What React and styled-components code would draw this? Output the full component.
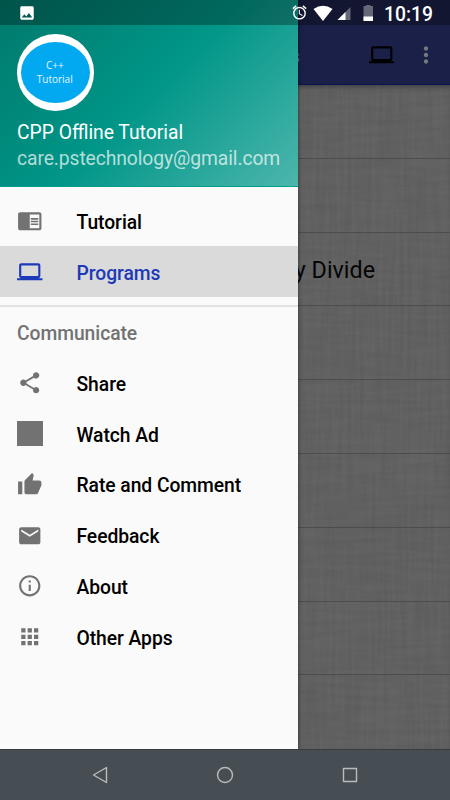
import React from "react";
import styled, { createGlobalStyle } from "styled-components";
import {
  MdAlarm,
  MdApps,
  MdChromeReaderMode,
  MdComputer,
  MdEmail,
  MdImage,
  MdInfoOutline,
  MdMoreVert,
  MdShare,
  MdThumbUp,
} from "react-icons/md";

const GlobalStyle = createGlobalStyle`
  * {
    box-sizing: border-box;
  }
  body {
    margin: 0;
    font-family: Roboto, "Noto Sans", sans-serif;
  }
`;
const Phone = styled.div`
  position: relative;
  display: flex;
  flex-direction: column;
  width: 450px;
  height: 800px;
  overflow: hidden;
`;
const AppBar = styled.header`
  display: flex;
  align-items: center;
  height: 85px;
  padding: 25px 11px 0 0;
  background: #1a2047;
  border-bottom: 1px solid #0a1250;
`;
const BarTitle = styled.div`
  width: 300px;
  padding-top: 2px;
  color: #696b76;
  font-size: 21px;
  font-weight: 500;
  text-align: right;
`;
const BarIcons = styled.div`
  display: flex;
  align-items: center;
  gap: 19px;
  margin-left: auto;
  color: #000;

  svg:last-child {
    color: #77777d;
  }
`;
const Content = styled.main`
  position: relative;
  flex: 1;
  background: #646464;
`;
const Cloth = styled.svg`
  position: absolute;
  inset: 0;
  width: 100%;
  height: 100%;
`;
const ProgramList = styled.div`
  position: relative;
  height: 664px;
  box-shadow: inset 0 5px 5px -3px rgba(0, 0, 0, 0.35);
`;
const ProgramRow = styled.div`
  display: flex;
  align-items: center;
  height: 73.8px;
  padding: 2px 0 0 18px;
  border-bottom: 1px solid #4c4c4c;
  color: #050505;
  font-size: 23.3px;

  &:last-child {
    border-bottom: 0;
  }
`;
const ProgramName = styled.div`
  width: 357px;
  text-align: right;
`;
const NavBar = styled.nav`
  position: relative;
  display: flex;
  justify-content: center;
  align-items: center;
  gap: 101px;
  height: 51px;
  background: #464e53;
  border-top: 1px solid #353b3f;
`;
const NavIcon = styled.svg`
  width: 24px;
  height: 24px;
  fill: none;
  stroke: #b9bcbe;
  stroke-width: 1.4;
  stroke-linejoin: round;
`;
const Drawer = styled.aside`
  position: absolute;
  top: 0;
  left: 0;
  width: 298px;
  height: 749px;
  background: #fafafa;
  box-shadow: 0 0 4px rgba(0, 0, 0, 0.55);
`;
const DrawerHeader = styled.div`
  height: 187px;
  padding: 34px 17px 0;
  background: linear-gradient(135deg, #00796b 0%, #009688 50%, #4db6ac 100%);
  border-bottom: 1px solid #009e8e;
  color: #fff;
  font-size: 19.3px;
`;
const Avatar = styled.div`
  display: flex;
  align-items: center;
  justify-content: center;
  width: 76.5px;
  height: 76.5px;
  border-radius: 50%;
  background: #fff;
`;
const AvatarText = styled.div`
  display: flex;
  align-items: center;
  justify-content: center;
  width: 69px;
  height: 61px;
  padding: 0 1px 1px 0;
  border-radius: 50%;
  background: #03a9f0;
  color: #e4f6ff;
  font-family: "Open Sans", sans-serif;
  font-size: 10px;
  line-height: 14px;
  text-align: center;
`;
const AppName = styled.div`
  margin-top: 9.5px;
  line-height: 26px;
`;
const Email = styled.div`
  line-height: 26px;
  letter-spacing: -0.09px;
  color: rgba(255, 255, 255, 0.7);
`;
const Menu = styled.div`
  padding-top: ${(props) => props.$top || 0}px;
`;
const MenuItem = styled.div`
  display: flex;
  align-items: center;
  gap: 34px;
  height: 50.85px;
  padding-left: 17px;
  background: ${(props) => (props.$selected ? "#dadada" : "transparent")};
  color: ${(props) => (props.$selected ? "#1c39b8" : "#000")};
  font-size: 19.3px;
  font-weight: 500;
  letter-spacing: -0.05px;

  svg {
    flex: none;
    color: ${(props) => (props.$selected ? "#1c39b8" : "#727272")};
  }
`;
const Label = styled.span`
  padding-top: 3px;
`;
const GroupTitle = styled.div`
  height: 52.3px;
  margin-top: 8px;
  padding-left: 17px;
  border-top: 2px solid #e2e2e2;
  color: #727272;
  font-size: 19.3px;
  font-weight: 500;
  line-height: 53px;
  letter-spacing: -0.05px;
`;
const AdSquare = styled.div`
  width: 25.5px;
  height: 25.5px;
  background: #727272;
`;
const StatusBar = styled.div`
  position: absolute;
  top: 0;
  left: 0;
  display: flex;
  align-items: center;
  width: 450px;
  height: 25px;
  padding: 0 17px 0 18px;
  background: rgba(0, 0, 0, 0.3);
  color: #fff;
`;
const StatusIcons = styled.div`
  display: flex;
  align-items: center;
  margin-left: auto;
`;
const SignalIcons = styled.svg`
  width: 65px;
  height: 18px;
  margin-left: 5px;
`;
const Clock = styled.div`
  margin-left: 6px;
  padding-top: 3px;
  font-size: 19.3px;
  font-weight: 500;
  line-height: 25px;
`;

const ICON = 25.5;

const programs = ["", "", "Multiply Divide", "", "", "", "", "", ""];

const communicate = [
  { name: "Share", icon: <MdShare size={ICON} /> },
  { name: "Watch Ad", icon: <AdSquare /> },
  { name: "Rate and Comment", icon: <MdThumbUp size={ICON} /> },
  { name: "Feedback", icon: <MdEmail size={ICON} /> },
  { name: "About", icon: <MdInfoOutline size={ICON} /> },
  { name: "Other Apps", icon: <MdApps size={ICON} /> },
];

const ClothTexture = () => (
  <Cloth>
    <filter id="warp" x="0" y="0" width="100%" height="100%">
      <feTurbulence type="fractalNoise" baseFrequency="0.25 0.012" numOctaves="3" seed="4" />
      <feColorMatrix values="0 0 0 0 0  0 0 0 0 0  0 0 0 0 0  0.9 0 0 0 -0.3" />
    </filter>
    <filter id="weft" x="0" y="0" width="100%" height="100%">
      <feTurbulence type="fractalNoise" baseFrequency="0.02 0.2" numOctaves="3" seed="9" />
      <feColorMatrix values="0 0 0 0 0  0 0 0 0 0  0 0 0 0 0  0.9 0 0 0 -0.3" />
    </filter>
    <rect width="100%" height="100%" filter="url(#warp)" opacity="0.1" />
    <rect width="100%" height="100%" filter="url(#weft)" opacity="0.09" />
  </Cloth>
);

const SystemStatus = () => (
  <StatusBar>
    <MdImage size={18} />
    <StatusIcons>
      <MdAlarm size={17} />
      <SignalIcons viewBox="0 0 65 18">
        <path d="M0.5 5 Q10 -1.5 19.5 5 L10 17 Z" fill="#fff" />
        <path d="M37.5 3 V16 H24.5 Z" fill="#fff" opacity="0.35" />
        <path d="M32.5 8 V16 H24.5 Z" fill="#fff" />
        <path d="M50.5 2 h2.5 V1 h4.5 v1 h2.5 V17 h-9.5 Z" fill="#fff" opacity="0.35" />
        <rect x="50.5" y="12.5" width="9.5" height="4.5" fill="#fff" />
      </SignalIcons>
      <Clock>10:19</Clock>
    </StatusIcons>
  </StatusBar>
);

const NavigationDrawer = () => (
  <Drawer>
    <DrawerHeader>
      <Avatar>
        <AvatarText>
          C++
          <br />
          Tutorial
        </AvatarText>
      </Avatar>
      <AppName>CPP Offline Tutorial</AppName>
      <Email>care.pstechnology@gmail.com</Email>
    </DrawerHeader>
    <Menu $top={8.4}>
      <MenuItem>
        <MdChromeReaderMode size={ICON} />
        <Label>Tutorial</Label>
      </MenuItem>
      <MenuItem $selected>
        <MdComputer size={ICON} />
        <Label>Programs</Label>
      </MenuItem>
    </Menu>
    <GroupTitle>Communicate</GroupTitle>
    <Menu>
      {communicate.map((item) => (
        <MenuItem key={item.name}>
          {item.icon}
          <Label>{item.name}</Label>
        </MenuItem>
      ))}
    </Menu>
  </Drawer>
);

const App = () => {
  return (
    <>
      <GlobalStyle />
      <Phone>
        <AppBar>
          <BarTitle>Programs</BarTitle>
          <BarIcons>
            <MdComputer size={25.5} />
            <MdMoreVert size={26} />
          </BarIcons>
        </AppBar>
        <Content>
          <ClothTexture />
          <ProgramList>
            {programs.map((name, i) => (
              <ProgramRow key={i}>
                <ProgramName>{name}</ProgramName>
              </ProgramRow>
            ))}
          </ProgramList>
        </Content>
        <NavigationDrawer />
        <NavBar>
          <NavIcon viewBox="0 0 24 24">
            <path d="M18.5 4.5 V19.5 L5.5 12 Z" />
          </NavIcon>
          <NavIcon viewBox="0 0 24 24">
            <circle cx="12" cy="12" r="7.5" />
          </NavIcon>
          <NavIcon viewBox="0 0 24 24">
            <rect x="5.5" y="5.5" width="13" height="13" />
          </NavIcon>
        </NavBar>
        <SystemStatus />
      </Phone>
    </>
  );
};

export default App;
